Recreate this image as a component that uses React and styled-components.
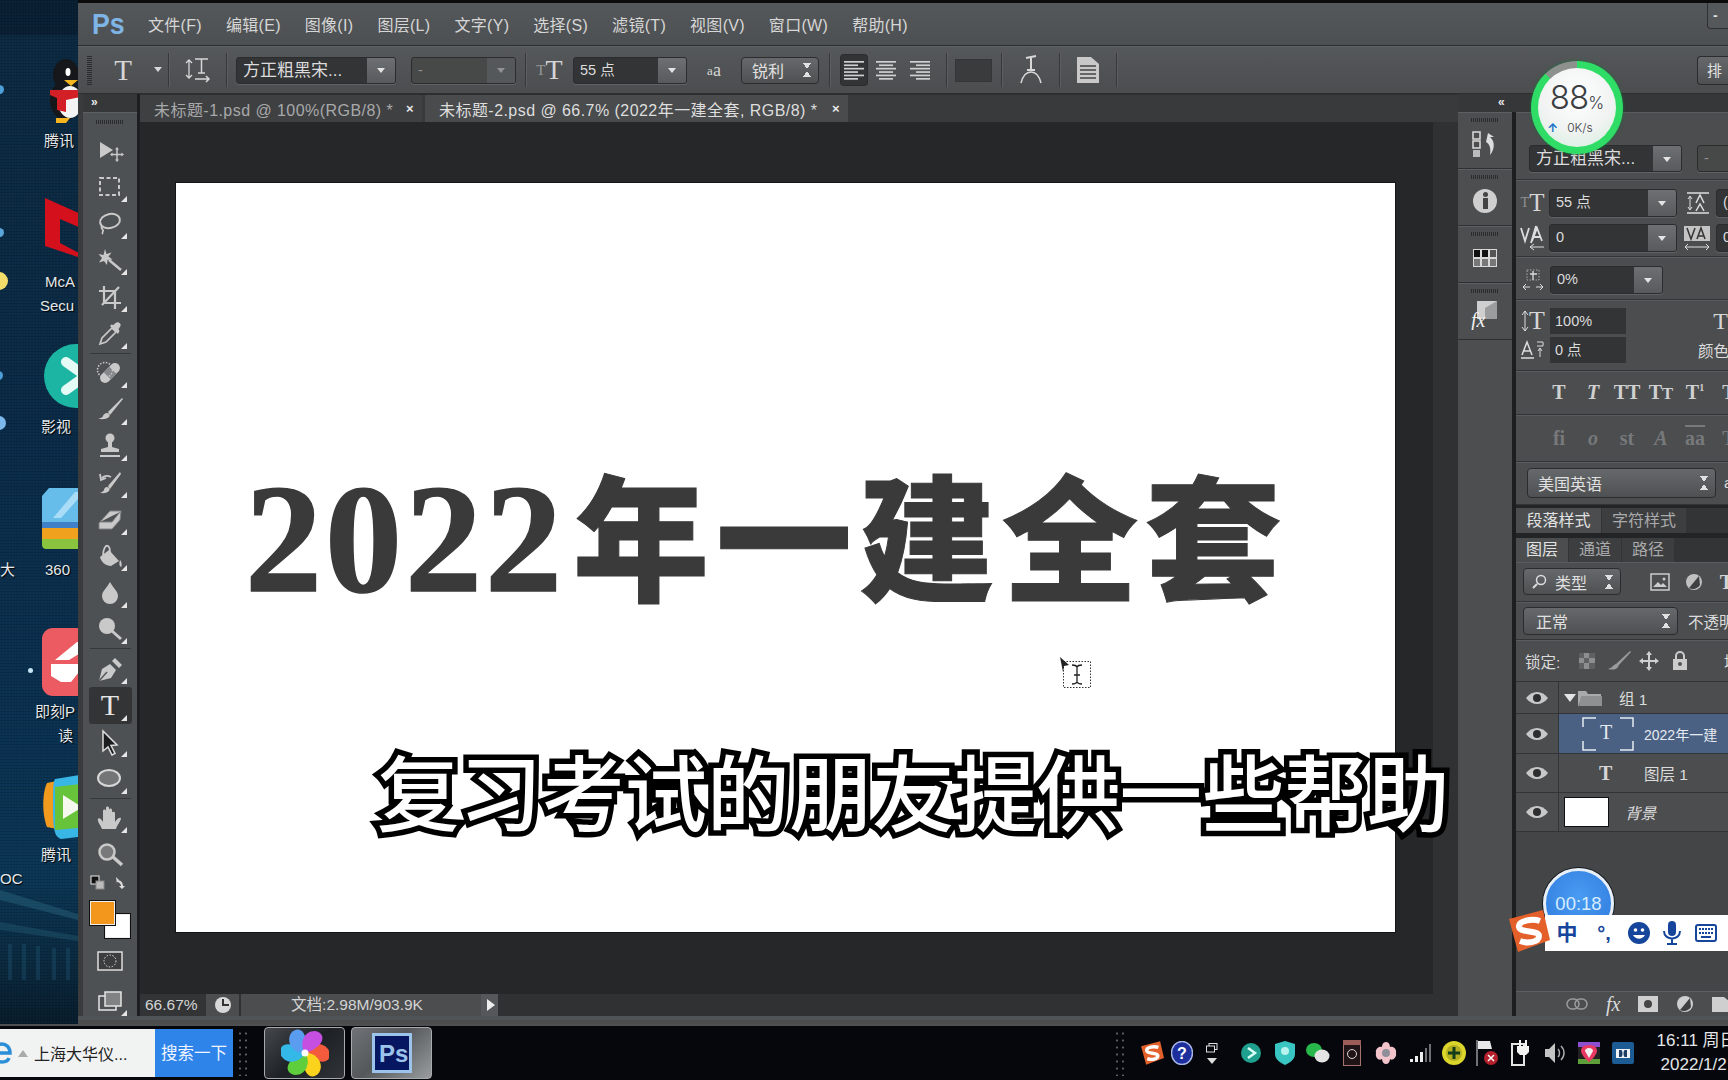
import React from "react";
import styled, { createGlobalStyle } from "styled-components";

const UI_FONT = `"Liberation Sans", "Noto Sans CJK SC", sans-serif`;

const GlobalStyle = createGlobalStyle`
  html, body { margin: 0; padding: 0; background: #000; }
  body { width: 1728px; height: 1080px; overflow: hidden; font-family: ${UI_FONT}; }
  * { box-sizing: border-box; }
`;

const Screen = styled.div`
  position: relative;
  width: 1728px;
  height: 1080px;
  overflow: hidden;
  display: grid;
  grid-template-columns: 78px 1650px;
  grid-template-rows: 1024px 56px;
`;

/* desktop behind the window */
const Wallpaper = styled.div`
  position: relative;
  overflow: hidden;
  background:
    repeating-linear-gradient(90deg, rgba(255,255,255,.012) 0 1px, transparent 1px 3px),
    repeating-linear-gradient(0deg, rgba(0,0,0,.14) 0 1px, transparent 1px 3px),
    linear-gradient(180deg, #091f33 0, #091f33 34px, #0b2941 36px, #0a2b47 420px, #0a3050 700px, #0a3655 880px, #0a2a40 960px, #071c2c 1024px);
`;

const WallBridge = styled.div`
  position: absolute;
  left: 0;
  top: 860px;
`;

const DeskIcon = styled.div`
  position: absolute;
  left: ${(p) => p.$x}px;
  top: ${(p) => p.$y}px;
`;

const DeskLabel = styled.div`
  position: absolute;
  left: ${(p) => p.$x}px;
  top: ${(p) => p.$y}px;
  color: #e4e8ea;
  font-size: 15px;
  line-height: 18px;
  white-space: nowrap;
  text-shadow: 1px 1px 1px #000;
`;

const Dot = styled.div`
  position: absolute;
  left: ${(p) => p.$x}px;
  top: ${(p) => p.$y}px;
  width: ${(p) => p.$s}px;
  height: ${(p) => p.$s}px;
  border-radius: 50%;
  background: ${(p) => p.$c};
`;

/* photoshop window */
const Win = styled.div`
  display: flex;
  flex-direction: column;
  height: 1024px;
  background: #4a4c4e;
  border-top: 3px solid #0b0b0c;
  border-left: 1px solid #222;
  margin-left: -1px;
`;

const MenuBar = styled.div`
  height: 43px;
  flex: none;
  display: flex;
  align-items: center;
  background: linear-gradient(180deg, #55585a, #4d5052);
  border-bottom: 1px solid #2b2c2d;
  position: relative;
  padding-left: 14px;
`;

const PsLogo = styled.div`
  width: 56px;
  font: bold 29px/1 "Liberation Sans", sans-serif;
  color: #7fb4e6;
  transform: scaleX(.92);
  transform-origin: left;
`;

const MenuItem = styled.span`
  color: #d6d6d6;
  font-size: 16px;
  margin-right: 24px;
  white-space: nowrap;
  letter-spacing: .3px;
`;

const WinBtn = styled.div`
  position: absolute;
  right: 0;
  top: 0;
  width: 21px;
  height: 26px;
  border: 1px solid #2f3031;
  border-top: 0;
  border-right: 0;
  border-radius: 0 0 0 4px;
  background: #55585a;
  color: #ddd;
  font: bold 14px/24px "Liberation Sans", sans-serif;
  padding-left: 5px;
`;

const OptionsBar = styled.div`
  height: 48px;
  flex: none;
  display: flex;
  align-items: center;
  padding-left: 9px;
  background: linear-gradient(180deg, #55585a, #4b4d4f);
  border-top: 1px solid #606366;
  border-bottom: 1px solid #2d2e2f;
`;

const Grip = styled.div`
  width: ${(p) => p.$w || 4}px;
  height: ${(p) => p.$h || 30}px;
  flex: none;
  background: repeating-linear-gradient(${(p) => (p.$flat ? "90deg" : "0deg")}, #2b2c2d 0 1px, transparent 1px 2px);
`;

const Slot = styled.div`
  width: ${(p) => p.$w}px;
  flex: none;
  display: flex;
  align-items: center;
  justify-content: center;
  color: #d9d9d9;
`;

const Sep = styled.div`
  width: 1px;
  height: 34px;
  flex: none;
  margin-left: ${(p) => p.$ml || 0}px;
  background: #37383a;
  box-shadow: 1px 0 0 #5c5f61;
`;

const SerifGlyph = styled.span`
  font-family: "Liberation Serif", serif;
  font-size: ${(p) => p.$s || 26}px;
  line-height: 1;
  color: ${(p) => p.$c || "#d6d6d6"};
  font-weight: ${(p) => p.$b || 400};
  font-style: ${(p) => (p.$i ? "italic" : "normal")};
`;

const Combo = styled.div`
  width: ${(p) => p.$w}px;
  height: ${(p) => p.$h || 27}px;
  flex: none;
  margin-left: ${(p) => p.$ml || 0}px;
  display: flex;
  border: 1px solid #2b2c2d;
  border-radius: 3px;
  background: ${(p) => (p.$dim ? "#474949" : "#333436")};
  box-shadow: 0 1px 0 #606366;
  overflow: hidden;
`;

const ComboText = styled.div`
  flex: 1;
  padding-left: 6px;
  font-size: ${(p) => p.$s || 14.5}px;
  line-height: 25px;
  color: ${(p) => (p.$dim ? "#8f9192" : "#dcdcdc")};
  white-space: nowrap;
  overflow: hidden;
`;

const ComboArrow = styled.div`
  width: 28px;
  flex: none;
  display: flex;
  align-items: center;
  justify-content: center;
  background: ${(p) => (p.$dim ? "#55585a" : "linear-gradient(180deg, #6d7072, #585a5c)")};
  &::after {
    content: "";
    border: 4px solid transparent;
    border-top: 5px solid ${(p) => (p.$dim ? "#8f9192" : "#e4e4e4")};
    margin-top: 5px;
  }
`;

const Stepper = styled.div`
  width: ${(p) => p.$w}px;
  height: ${(p) => p.$h || 27}px;
  flex: none;
  margin-left: ${(p) => p.$ml || 0}px;
  display: flex;
  align-items: center;
  justify-content: space-between;
  padding: 0 7px 0 ${(p) => p.$pl || 10}px;
  border: 1px solid #2b2c2d;
  border-radius: 4px;
  background: linear-gradient(180deg, #66696b, #4e5052);
  color: #e0e0e0;
  font-size: 16px;
  white-space: nowrap;
  &::after {
    content: "";
    width: 8px;
    height: 14px;
    flex: none;
    background:
      linear-gradient(to top right, transparent 50%, #e0e0e0 50%) 0 0 / 4px 6px no-repeat,
      linear-gradient(to top left, transparent 50%, #e0e0e0 50%) 4px 0 / 4px 6px no-repeat,
      linear-gradient(to bottom right, transparent 50%, #e0e0e0 50%) 0 8px / 4px 6px no-repeat,
      linear-gradient(to bottom left, transparent 50%, #e0e0e0 50%) 4px 8px / 4px 6px no-repeat;
  }
`;

const AlignBtn = styled.div`
  width: ${(p) => p.$w}px;
  height: 30px;
  flex: none;
  margin-left: ${(p) => p.$ml || 0}px;
  display: flex;
  align-items: center;
  justify-content: center;
  border-radius: 3px;
  background: ${(p) => (p.$on ? "#333436" : "transparent")};
  box-shadow: ${(p) => (p.$on ? "0 0 0 1px #2b2c2d" : "none")};
`;

const Swatch = styled.div`
  width: 37px;
  height: 23px;
  flex: none;
  margin-left: 8px;
  background: #3a3b3c;
  border: 1px solid #343536;
`;

const WordBtn = styled.div`
  margin-left: auto;
  width: 31px;
  height: 29px;
  border: 1px solid #2b2c2d;
  border-right: 0;
  border-radius: 4px 0 0 4px;
  background: linear-gradient(180deg, #66696b, #4e5052);
  color: #e0e0e0;
  font-size: 15px;
  line-height: 27px;
  padding-left: 9px;
  white-space: nowrap;
`;

const Workspace = styled.div`
  height: 922px;
  flex: none;
  display: flex;
  background: #1d1e1f;
`;

const ToolCol = styled.div`
  width: 59px;
  flex: none;
  padding-left: 5px;
  display: flex;
  flex-direction: column;
  background: #3a3b3d;
`;

const CollapseStrip = styled.div`
  height: 18px;
  flex: none;
  background: #363739;
  color: #e8e8e8;
  font: bold 12px/17px "Liberation Sans", sans-serif;
  padding-left: ${(p) => p.$pl}px;
`;

const ToolBox = styled.div`
  flex: 1;
  display: flex;
  flex-direction: column;
  align-items: center;
  background: #4e5153;
  border-top: 1px solid #5d6062;
`;

const ToolGrip = styled(Grip)`
  margin: 7px 0 8px;
`;

const ToolCell = styled.div`
  position: relative;
  width: 43px;
  height: 36.6px;
  flex: none;
  display: flex;
  align-items: center;
  justify-content: center;
  border-radius: 3px;
  background: ${(p) => (p.$on ? "#333436" : "transparent")};
  &::after {
    content: "";
    display: ${(p) => (p.$more ? "block" : "none")};
    position: absolute;
    right: 5px;
    bottom: 3px;
    border-left: 6px solid transparent;
    border-bottom: 6px solid #e6e6e6;
  }
`;

const ToolRule = styled.div`
  width: 41px;
  height: 1px;
  margin: 1px 0;
  flex: none;
  background: #37383a;
`;

const ColorWell = styled.div`
  position: relative;
  width: 43px;
  height: 40px;
  flex: none;
  margin-top: 9px;
`;

const ColorChip = styled.div`
  position: absolute;
  left: ${(p) => p.$x}px;
  top: ${(p) => p.$y}px;
  width: 27px;
  height: 26px;
  background: ${(p) => p.$c};
  border: 1px solid #111;
  box-shadow: inset 0 0 0 1px #eee;
`;

const QuickMask = styled.div`
  height: 42px;
  flex: none;
  margin-top: 1px;
`;

const Center = styled.div`
  width: 1318px;
  flex: none;
  margin-left: 3px;
  display: flex;
  flex-direction: column;
  background: #262729;
`;

const TabRow = styled.div`
  height: 28px;
  flex: none;
  display: flex;
  align-items: flex-end;
  background: #393a3c;
  border-top: 1px solid #2d2e2f;
`;

const DocTab = styled.div`
  width: ${(p) => p.$w}px;
  height: 27px;
  flex: none;
  margin-right: 3px;
  display: flex;
  align-items: center;
  justify-content: space-between;
  padding: 0 8px 0 14px;
  background: ${(p) => (p.$on ? "#494b4d" : "#3f4042")};
  color: ${(p) => (p.$on ? "#dedede" : "#a8a9aa")};
  font-size: 16px;
  letter-spacing: .45px;
  white-space: nowrap;
  b { color: #e8e8e8; font-weight: 700; font-size: 13px; }
`;

const CanvasArea = styled.div`
  flex: 1;
  min-height: 0;
  display: flex;
`;

const Pasteboard = styled.div`
  width: 1293px;
  flex: none;
  padding: 61px 0 0 36px;
  background: #262729;
`;

const Gutter = styled.div`
  flex: 1;
  background: #303133;
`;

const Doc = styled.div`
  position: relative;
  width: 1219px;
  height: 749px;
  background: #fff;
  padding: 274px 0 0 69px;
  box-shadow: 0 0 0 1px #151515;
`;

const Heading = styled.h1`
  margin: 0;
  display: flex;
  align-items: baseline;
  color: #3a3a3a;
  white-space: nowrap;
  font-family: "Noto Sans CJK SC", sans-serif;
  font-weight: 900;
  font-size: 136px;
  line-height: 150px;
  letter-spacing: 7px;
  -webkit-text-stroke: 1px #3a3a3a;
`;

const HeadingDigits = styled.span`
  font-family: "Liberation Serif", serif;
  font-weight: 700;
  font-size: 154px;
  letter-spacing: 3px;
  margin-right: 8px;
  -webkit-text-stroke: 1.500px #3a3a3a;
`;

const TextCursor = styled.div`
  position: absolute;
  left: 884px;
  top: 474px;
`;

const StatusBar = styled.div`
  height: 22px;
  flex: none;
  display: flex;
  align-items: stretch;
  color: #d4d4d4;
  font-size: 15.5px;
  line-height: 22px;
  background: #303133;
`;

const StatusZoom = styled.div`
  width: 66px;
  padding-left: 5px;
  background: #333436;
`;

const StatusBtn = styled.div`
  width: 33px;
  display: flex;
  align-items: center;
  justify-content: center;
  background: #4b4d4f;
  margin-right: 2px;
`;

const StatusInfo = styled.div`
  width: 240px;
  text-align: center;
  padding-right: 8px;
  background: #4b4d4f;
  white-space: nowrap;
`;

const StatusArrow = styled.div`
  width: 17px;
  display: flex;
  align-items: center;
  justify-content: center;
  background: #55585a;
  &::after {
    content: "";
    border: 6px solid transparent;
    border-left: 8px solid #eee;
    margin-left: 8px;
  }
`;

const RightCol = styled.div`
  width: 270px;
  flex: none;
  display: flex;
  flex-direction: column;
`;

const RightBody = styled.div`
  flex: 1;
  min-height: 0;
  display: flex;
`;

const Dock = styled.div`
  width: 54px;
  flex: none;
  display: flex;
  flex-direction: column;
  background: #4c4e50;
`;

const DockCell = styled.div`
  height: 57px;
  flex: none;
  display: flex;
  flex-direction: column;
  align-items: center;
  padding-top: 5px;
  gap: 4px;
  background: #4c4e50;
  border-bottom: 1px solid #2f3031;
  border-top: 1px solid #5d6062;
`;

const DockIcon = styled.div`
  height: 36px;
  flex: none;
  display: flex;
  align-items: center;
  justify-content: center;
`;

const Panel = styled.div`
  width: 212px;
  flex: none;
  margin-left: 4px;
  display: flex;
  flex-direction: column;
  overflow: hidden;
  background: #46484a;
`;

const Section = styled.div`
  height: ${(p) => p.$h}px;
  flex: none;
  display: flex;
  flex-direction: column;
  justify-content: ${(p) => p.$jc || "center"};
  gap: ${(p) => p.$gap || 0}px;
  padding-left: ${(p) => p.$pl || 0}px;
  padding-bottom: ${(p) => p.$pb || 0}px;
  padding-top: ${(p) => p.$pt || 0}px;
  background: #4b4d4f;
  border-bottom: 1px solid #333435;
  box-shadow: inset 0 1px 0 #5a5d5f;
`;

const Row = styled.div`
  display: flex;
  align-items: center;
  white-space: nowrap;
  gap: ${(p) => p.$gap || 0}px;
`;

const FieldIcon = styled.div`
  width: ${(p) => p.$w || 33}px;
  flex: none;
  display: flex;
  align-items: center;
  justify-content: ${(p) => (p.$end ? "flex-end" : "center")};
  color: #d8d8d8;
`;

const PlainField = styled.div`
  width: 76px;
  height: 26px;
  flex: none;
  padding-left: 5px;
  background: #333436;
  color: #dcdcdc;
  font-size: 14.5px;
  line-height: 26px;
`;

const StyleGlyphs = styled.div`
  display: flex;
  padding-left: 26px;
`;

const StyleGlyph = styled.span`
  width: 34px;
  flex: none;
  text-align: center;
  font-family: "Liberation Serif", serif;
  font-size: ${(p) => p.$s || 20}px;
  font-weight: 700;
  font-style: ${(p) => (p.$i ? "italic" : "normal")};
  text-decoration: ${(p) => (p.$over ? "overline" : "none")};
  color: ${(p) => (p.$dim ? "#77797b" : "#d0d0d0")};
  white-space: nowrap;
  sup { font-size: 10px; }
`;

const Gap = styled.div`
  height: ${(p) => p.$h}px;
  flex: none;
  background: #232425;
`;

const PanelTabs = styled.div`
  height: ${(p) => p.$h}px;
  flex: none;
  display: flex;
  background: #333436;
`;

const PanelTab = styled.div`
  width: ${(p) => p.$w}px;
  flex: none;
  margin-right: 1px;
  text-align: center;
  font-size: 16px;
  line-height: ${(p) => p.$h}px;
  background: ${(p) => (p.$on ? "#4b4d4f" : "#3d3e40")};
  color: ${(p) => (p.$on ? "#e2e2e2" : "#a9aaab")};
`;

const Label = styled.span`
  color: ${(p) => p.$c || "#dcdcdc"};
  font-size: ${(p) => p.$s || 15.5}px;
  font-style: ${(p) => (p.$i ? "italic" : "normal")};
  width: ${(p) => (p.$w ? `${p.$w}px` : "auto")};
  margin-left: ${(p) => p.$ml || 0}px;
  flex: none;
  white-space: nowrap;
`;

const LayerRow = styled.div`
  height: ${(p) => p.$h}px;
  flex: none;
  display: flex;
  background: #4b4d4f;
  border-bottom: 1px solid #333435;
`;

const EyeCell = styled.div`
  width: 43px;
  flex: none;
  display: flex;
  align-items: center;
  justify-content: center;
  border-right: 1px solid #333435;
`;

const LayerBody = styled.div`
  flex: 1;
  display: flex;
  align-items: center;
  padding-left: ${(p) => p.$pl || 0}px;
  background: ${(p) => (p.$on ? "#4a6184" : "transparent")};
  white-space: nowrap;
`;

const SmartThumb = styled.div`
  position: relative;
  width: 52px;
  height: 34px;
  flex: none;
  display: flex;
  align-items: center;
  justify-content: center;
  margin-right: 10px;
`;

const ThumbGlyph = styled(SerifGlyph)`
  position: absolute;
  left: 18px;
  top: 5px;
`;

const RowGlyph = styled(SerifGlyph)`
  width: 45px;
  flex: none;
`;

const WhiteThumb = styled.div`
  width: 45px;
  height: 30px;
  flex: none;
  margin-right: 16px;
  background: #fff;
  border: 1px solid #111;
`;

const PanelFill = styled.div`
  flex: 1;
  background: ${(p) => p.$c || "#434547"};
`;

const PanelFoot = styled.div`
  height: 25px;
  flex: none;
  display: flex;
  align-items: center;
  padding-left: 50px;
  gap: 18px;
  background: #4b4d4f;
  border-top: 1px solid #5d6062;
`;

const WinFoot = styled.div`
  height: 4px;
  flex: none;
  background: #515456;
`;

/* taskbar */
const Taskbar = styled.div`
  grid-column: 1 / -1;
  display: flex;
  align-items: center;
  background: #05070c;
  border-top: 2px solid #4d4f51;
`;

const SearchBox = styled.div`
  width: 155px;
  height: 48px;
  flex: none;
  display: flex;
  align-items: center;
  background: #f1f2f2;
  overflow: hidden;
  color: #222;
  font-size: 16px;
  gap: 6px;
  white-space: nowrap;
`;

const SearchBtn = styled.div`
  width: 78px;
  height: 48px;
  flex: none;
  background: #2f84ea;
  color: #f0f5ff;
  font-size: 16.5px;
  line-height: 48px;
  text-align: center;
  white-space: nowrap;
`;

const DotGrip = styled.div`
  width: 12px;
  height: 46px;
  flex: none;
  margin-left: ${(p) => p.$ml}px;
  background: radial-gradient(circle, #5c5f63 1px, transparent 1.2px) 0 0 / 6px 7px;
`;

const TaskBtn = styled.div`
  width: 81px;
  height: 52px;
  flex: none;
  margin-left: ${(p) => p.$ml}px;
  display: flex;
  align-items: center;
  justify-content: center;
  border: 1px solid #a8abae;
  border-radius: 4px;
  background: ${(p) => (p.$on ? "linear-gradient(135deg, #6f7276, #55585b 45%, #9a9da0)" : "linear-gradient(135deg, #44484c, #1d2024 50%, #303338)")};
`;

const TrayGroup = styled.div`
  display: flex;
  flex: none;
  margin-left: ${(p) => p.$ml}px;
`;

const TrayCell = styled.div`
  width: ${(p) => p.$w}px;
  flex: none;
  display: flex;
  flex-direction: column;
  align-items: center;
  justify-content: center;
  gap: 5px;
`;

const Clock = styled.div`
  flex: none;
  margin-left: 17px;
  color: #e4e6e8;
  font-size: 17px;
  line-height: 24px;
  white-space: nowrap;
`;

const ClockDate = styled.div`
  padding-left: 4px;
`;

/* things floating above everything */
const Subtitle = styled.div`
  position: absolute;
  left: 377px;
  top: 729px;
  color: #fff;
  font-family: "Noto Sans CJK SC", sans-serif;
  font-weight: 500;
  font-size: 82.5px;
  line-height: 120px;
  white-space: nowrap;
  -webkit-text-stroke: 11px #000;
  paint-order: stroke fill;
`;

const SpeedBall = styled.div`
  position: absolute;
  left: 1531px;
  top: 61px;
  width: 92px;
  height: 93px;
  border-radius: 50%;
  padding: 7px;
  background: conic-gradient(#2fdc66 0 88%, #8d918e 88% 100%);
  box-shadow: 0 0 3px #0f7a35;
`;

const BallFace = styled.div`
  width: 100%;
  height: 100%;
  border-radius: 50%;
  display: flex;
  flex-direction: column;
  align-items: center;
  padding-top: 12px;
  background: radial-gradient(circle at 50% 35%, #fff 0, #f1f3f2 55%, #cfeeda 100%);
  color: #3c4043;
  font-family: Inter, sans-serif;
  font-weight: 300;
`;

const BallValue = styled.div`
  font-size: 33px;
  line-height: 34px;
  letter-spacing: -1px;
  small { font-size: 17px; letter-spacing: 0; }
`;

const BallSpeed = styled.div`
  display: flex;
  gap: 9px;
  font-size: 12px;
  line-height: 18px;
  margin: -1px 14px 0 0;
  i { color: #1d74c9; font-style: normal; font-weight: 700; }
`;

const TimerBall = styled.div`
  position: absolute;
  left: 1543px;
  top: 868px;
  width: 71px;
  height: 71px;
  border-radius: 50%;
  border: 3px solid #e6eef7;
  box-shadow: 0 0 0 1px #15181c;
  background: radial-gradient(circle at 50% 40%, #4a9cf2, #2c78dc);
  color: #d5ecff;
  font-size: 18.5px;
  line-height: 65px;
  text-align: center;
`;

const ImeBar = styled.div`
  position: absolute;
  left: 1507px;
  top: 910px;
  width: 221px;
  height: 42px;
  display: flex;
  align-items: center;
`;

const ImeLogo = styled.div`
  position: relative;
  z-index: 1;
  width: 43px;
  height: 42px;
  flex: none;
  margin-right: -5px;
`;

const ImeBody = styled.div`
  flex: 1;
  height: 36px;
  margin-top: 3px;
  display: flex;
  align-items: center;
  background: #fff;
  color: #16469c;
`;

const ImeItem = styled.div`
  width: ${(p) => p.$w}px;
  flex: none;
  display: flex;
  justify-content: center;
  font-size: ${(p) => p.$s || 20}px;
  font-weight: 700;
  line-height: 1;
`;

/* icons */
const C = "#c9c9c9";

const Svg = ({ w = 28, h = 28, vb, children }) => (
  <svg width={w} height={h} viewBox={vb || `0 0 ${w} ${h}`} fill="none" style={{ display: "block", flex: "none" }}>
    {children}
  </svg>
);

const tools = [
  { k: "move", d: <><path d="M5 6l13 8-13 8z" fill={C} /><path d="M22 13v11M17 18.500h10" stroke={C} strokeWidth="1.500" /><path d="M22 11l-2 2.500h4zM22 26l-2-2.500h4zM15 18.500l2.500-2v4zM29 18.500l-2.500-2v4z" fill={C} /></> },
  { k: "marquee", more: 1, d: <rect x="5" y="5" width="19" height="17" stroke={C} strokeWidth="2" strokeDasharray="4 2.500" /> },
  { k: "lasso", more: 1, d: <><ellipse cx="15" cy="12" rx="10" ry="7" stroke={C} strokeWidth="2" transform="rotate(-12 15 12)" /><path d="M7 17c-2 3 2 3 1 5s-1 2 0 3" stroke={C} strokeWidth="1.800" /></> },
  { k: "wand", more: 1, d: <><path d="M10 3l1.500 5 5-1.500-3 4 4 3-5 .5-.5 5-3-4-5 1.500 3-4.500-3.500-4 5 1z" fill={C} /><path d="M14 14l12 10" stroke={C} strokeWidth="2.500" /></> },
  { k: "crop", more: 1, d: <path d="M9 3v17h17M4 8h16v18M24 4L7 22" stroke={C} strokeWidth="2.200" /> },
  { k: "dropper", more: 1, d: <><path d="M5 25l2-6L17 9l4 4-10 10z" stroke={C} strokeWidth="1.700" /><path d="M15 7l8 8 1.500-3-1-2 2-3c1-3-3-5-5-3l-2 2-2-.5z" fill={C} /></>, rule: 1 },
  { k: "heal", more: 1, d: <><g transform="rotate(-45 15 14)"><rect x="3" y="9" width="24" height="10" rx="5" fill={C} /><rect x="11" y="9" width="8" height="10" fill="#85878a" /></g><circle cx="10" cy="11" r="7.500" stroke={C} strokeWidth="1.500" strokeDasharray="1.500 1.500" /></> },
  { k: "brush", more: 1, d: <><path d="M27 3L13 17l2 3L28 4z" fill={C} /><path d="M12 18c3 0 3 3 2 4-3 3-8 2-11 2 3-1 5-2 5-3s2-3 4-3z" fill={C} /></> },
  { k: "stamp", more: 1, d: <><circle cx="15" cy="6" r="4.500" fill={C} /><path d="M13 10h4v5l7 2v3H6v-3l7-2z" fill={C} /><path d="M5 23h20v2H5z" fill={C} /></> },
  { k: "history", more: 1, d: <><path d="M25 3L13 17l2 3L26 5z" fill={C} /><path d="M12 18c3 0 3 3 2 4-3 3-7 2-9 2 2-1 4-2 4-3s1-3 3-3z" fill={C} /><path d="M16 8c-4-2-7-1-9 1M5 5l1 6 5-2" stroke={C} strokeWidth="1.800" /></> },
  { k: "eraser", more: 1, d: <path d="M4 18L15 6h11l-1 9-8 9H4zM5 17h12l8-10" fill={C} stroke="#7e8082" strokeWidth="1" /> },
  { k: "bucket", more: 1, d: <><path d="M5 15l9-7 10 11-8 5c-5 0-10-4-11-9z" fill={C} /><path d="M8 14c0-8 3-11 5-10s2 4 2 7" stroke={C} strokeWidth="1.800" /><path d="M25 18c2 2 2 6 1 7-2-1-2-4-1-7z" fill={C} /></> },
  { k: "blur", more: 1, d: <path d="M15 4c3 6 8 9 8 14a8 8 0 01-16 0c0-5 5-8 8-14z" fill={C} /> },
  { k: "dodge", more: 1, d: <><circle cx="12" cy="11" r="8" fill={C} /><path d="M17 16l9 8" stroke={C} strokeWidth="3" /></>, rule: 1 },
  { k: "pen", more: 1, d: <><path d="M4 26l3-12 8-5 6 6-5 8z" fill={C} /><path d="M4 26l8-9" stroke="#55585a" strokeWidth="1.500" /><path d="M17 6l3-3 7 7-3 3z" fill={C} /></> },
  { k: "type", more: 1, on: 1, glyph: 1 },
  { k: "select", more: 1, d: <path d="M8 3l14 14-6 .5 4 8-3 1.500-4-8-5 4z" fill="#1c1d1e" stroke="#dedede" strokeWidth="1.500" /> },
  { k: "ellipse", more: 1, d: <ellipse cx="14" cy="14" rx="11" ry="8" fill="#737577" stroke="#d8d8d8" strokeWidth="2" />, rule: 1 },
  { k: "hand", more: 1, d: <path d="M7 25C5 20 2 17 3 15s4 1 5 3V7c0-2 3-2 3 0V4c0-2 3-2 3 0v2c0-2 3-2 3 0v3c0-2 3-1 3 0v9c2-3 4-5 6-4 0 3-4 7-5 11z" fill={C} /> },
  { k: "zoom", d: <><circle cx="12" cy="11" r="7.500" fill="#77797b" stroke={C} strokeWidth="2.500" /><path d="M18 16l9 8" stroke={C} strokeWidth="3.500" /></> },
];

const Tri = ({ c = "#d8d8d8" }) => (
  <Svg w={10} h={6}><path d="M1 0h8L5 5z" fill={c} /></Svg>
);

const AlignIcon = ({ side }) => {
  const x = (w) => (side === "left" ? 4 : side === "right" ? 24 - w : 14 - w / 2);
  const lines = [20, 14, 20, 14, 20, 14];
  return (
    <Svg w={28} h={24}>
      {lines.map((w, i) => (
        <rect key={i} x={x(w)} y={3 + i * 3.400} width={w} height="1.700" fill="#cfcfcf" />
      ))}
    </Svg>
  );
};

const Eye = () => (
  <Svg w={24} h={16}>
    <path d="M1 8c6-8 16-8 22 0-6 8-16 8-22 0z" fill="#c8c8c8" />
    <circle cx="12" cy="8" r="4" fill="#2d2e2f" />
  </Svg>
);

const Penguin = () => (
  <Svg w={34} h={66}>
    <ellipse cx="20" cy="17" rx="13" ry="16" fill="#15171b" />
    <ellipse cx="20" cy="42" rx="16" ry="20" fill="#15171b" />
    <ellipse cx="24" cy="44" rx="12" ry="16" fill="#f4f4f4" />
    <path d="M4 32h30v7l-14 3v12l-9-2v-12l-7-3z" fill="#d32027" />
    <path d="M18 22h14l-7 6z" fill="#f3b61f" />
    <ellipse cx="22" cy="14" rx="2.500" ry="4" fill="#fff" />
    <path d="M10 60h14l-4 5h-10z" fill="#f3b61f" />
  </Svg>
);

const McAfee = () => (
  <Svg w={36} h={70}>
    <path d="M0 0l36 16v14l-21-9v24l21 11v4L0 48z" fill="#d4101c" />
  </Svg>
);

const TealApp = () => (
  <Svg w={36} h={64}>
    <circle cx="32" cy="32" r="32" fill="#1cb5a3" />
    <path d="M22 18l14 10M22 46l14-10" stroke="#e4fbf6" strokeWidth="10" strokeLinecap="round" />
  </Svg>
);

const StackApp = () => (
  <Svg w={38} h={66}>
    <path d="M4 38h34v25H6c-4 0-5-2-5-5V42z" fill="#8ac43f" />
    <path d="M1 36h37v17H1z" fill="#f0a21f" />
    <path d="M1 32h37v10H1z" fill="#3f80c8" />
    <path d="M8 2h30v34H1V10z" fill="#67bde9" />
    <path d="M12 32L34 6h4v6L20 32z" fill="#a9dcf6" />
  </Svg>
);

const RedApp = () => (
  <Svg w={38} h={70}>
    <rect x="1" y="0" width="52" height="68" rx="11" fill="#ec5b61" />
    <path d="M36 14l2 0v12l-10 6H14zM10 36h28v8l-8 10H20l-10-6z" fill="#fff" />
  </Svg>
);

const VideoApp = () => (
  <Svg w={38} h={64}>
    <path d="M6 8C1 18 1 40 6 52l10 2V6z" fill="#f29a1d" />
    <path d="M14 4l24-4v62l-18 2c-6-2-8-8-8-30s0-26 2-30z" fill="#38b6e6" />
    <path d="M14 12l24-3v44l-24 2z" fill="#66c33a" />
    <path d="M22 20l16 10v4l-16 10z" fill="#f4f8ee" />
  </Svg>
);

const Bridge = () => (
  <Svg w={78} h={120}>
    <path d="M0 30l78 24v6L0 40z" fill="#2f6e86" opacity=".4" />
    <path d="M0 62l78 14v5L0 70z" fill="#2f6e86" opacity=".3" />
    <path d="M8 84h4v36H8zM22 84h4v36h-4zM36 86h4v34h-4zM52 88h4v32h-4zM66 88h4v32h-4z" fill="#1a4a66" opacity=".5" />
  </Svg>
);

const SogouLogo = ({ w = 43, h = 42 }) => (
  <Svg w={w} h={h} vb="0 0 43 42">
    <path d="M2 9L36 0l7 30-32 12z" fill="#e4602a" />
    <path d="M33 11C25 8 11 11 12 17s20 3 20 9-11 8-19 5" stroke="#fff" strokeWidth="6" fill="none" />
  </Svg>
);

const trayIcons = [
  <Svg w={20} h={20}><circle cx="10" cy="10" r="10" fill="#1f9f8e" /><path d="M7 5l7 5-7 5" stroke="#d8fff5" strokeWidth="2.500" /></Svg>,
  <Svg w={20} h={24}><path d="M10 0l10 3v10c0 6-6 9-10 11C6 22 0 19 0 13V3z" fill="#39c6c2" /><circle cx="10" cy="10" r="4" fill="#b9f3ee" /></Svg>,
  <Svg w={24} h={22}><ellipse cx="8" cy="8" rx="8" ry="7" fill="#27b74a" /><ellipse cx="16" cy="14" rx="7.500" ry="6.500" fill="#e4e4e4" /></Svg>,
  <Svg w={18} h={26}><rect x="0.500" y="0.500" width="17" height="25" fill="#201417" stroke="#a4736f" /><rect x="0" y="0" width="18" height="5" fill="#9c5c58" /><circle cx="9" cy="14" r="4.500" stroke="#d9d9d9" /></Svg>,
  <Svg w={24} h={24}><path d="M12 1c3 0 4 3 4 5 3-1 7 2 6 6 1 5-4 8-6 6 0 3-2 5-4 5s-4-2-4-5c-3 2-7-1-6-6-1-4 3-7 6-6 0-2 1-5 4-5z" fill="#f3c3cc" /><circle cx="12" cy="12" r="4" fill="#8e8f99" /></Svg>,
  <Svg w={22} h={20}><path d="M1 16h3v3H1zM6 13h3v6H6zM11 9h3v10h-3z" fill="#eee" /><path d="M16 5h2v14h-2zM20 1h2v18h-2z" fill="#6c6f73" /></Svg>,
  <Svg w={24} h={24}><circle cx="12" cy="12" r="12" fill="#dcd52c" /><circle cx="12" cy="12" r="8" fill="#b5b021" /><path d="M12 6v12M6 12h12" stroke="#143d1b" strokeWidth="3" /></Svg>,
  <Svg w={22} h={26}><path d="M1 0v26" stroke="#ddd" /><path d="M2 1h12l2 8H2z" fill="#e9e9e9" /><circle cx="15" cy="18" r="7" fill="#b4202c" /><path d="M12 15l6 6M18 15l-6 6" stroke="#fff" strokeWidth="1.500" /></Svg>,
  <Svg w={20} h={26}><rect x="1" y="4" width="12" height="21" fill="none" stroke="#e4e4e4" strokeWidth="2" /><path d="M8 0h2v6H8zM14 0h2v6h-2zM6 6h12v6l-3 3H9l-3-3z" fill="#f2f2f2" /></Svg>,
  <Svg w={22} h={20}><path d="M1 6h4l6-6v20l-6-6H1z" fill="#c4c4c4" /><path d="M14 6c2 2 2 6 0 8M17 3c4 4 4 10 0 14" stroke="#aaa" strokeWidth="1.500" /></Svg>,
  <Svg w={22} h={22}><rect width="22" height="22" fill="#222" /><path d="M0 0h22v5H0z" fill="#8c4fd0" /><path d="M0 17h22v5H0z" fill="#5e9f3a" /><path d="M11 3c6 0 8 3 8 6s-5 9-8 11C8 18 3 12 3 9s2-6 8-6z" fill="#e83a62" /><path d="M11 6c3 0 4 2 4 3l-4 7-4-7c0-1 1-3 4-3z" fill="#f2f2f2" /></Svg>,
  <Svg w={22} h={22}><rect width="22" height="22" rx="2" fill="#1d5b94" /><rect x="4" y="7" width="14" height="9" fill="#f0f4f8" /><path d="M7 8h2c2 0 2 7 0 7H7zM15 8h-2c-2 0-2 7 0 7h2z" fill="#1d3f66" /></Svg>,
];

const App = () => (
  <Screen>
    <GlobalStyle />
    <Wallpaper>
      <WallBridge><Bridge /></WallBridge>
      <Dot $x={-5} $y={85} $s={9} $c="#4e9ed8" />
      <Dot $x={-5} $y={228} $s={9} $c="#5aa6da" />
      <Dot $x={-10} $y={272} $s={18} $c="#f2dd6a" />
      <Dot $x={-6} $y={371} $s={9} $c="#4e9ed8" />
      <Dot $x={-8} $y={416} $s={14} $c="#7cb8ec" />
      <Dot $x={28} $y={668} $s={5} $c="#c5e6f5" />
      <DeskIcon $x={46} $y={58}><Penguin /></DeskIcon>
      <DeskLabel $x={44} $y={132}>腾讯</DeskLabel>
      <DeskIcon $x={45} $y={198}><McAfee /></DeskIcon>
      <DeskLabel $x={45} $y={273}>McA</DeskLabel>
      <DeskLabel $x={40} $y={297}>Secu</DeskLabel>
      <DeskIcon $x={44} $y={344}><TealApp /></DeskIcon>
      <DeskLabel $x={41} $y={418}>影视</DeskLabel>
      <DeskIcon $x={41} $y={486}><StackApp /></DeskIcon>
      <DeskLabel $x={45} $y={561}>360</DeskLabel>
      <DeskLabel $x={0} $y={561}>大</DeskLabel>
      <DeskIcon $x={41} $y={628}><RedApp /></DeskIcon>
      <DeskLabel $x={35} $y={703}>即刻P</DeskLabel>
      <DeskLabel $x={58} $y={727}>读</DeskLabel>
      <DeskIcon $x={41} $y={775}><VideoApp /></DeskIcon>
      <DeskLabel $x={41} $y={846}>腾讯</DeskLabel>
      <DeskLabel $x={0} $y={870}>OC</DeskLabel>
    </Wallpaper>

    <Win>
      <MenuBar>
        <PsLogo>Ps</PsLogo>
        {["文件(F)", "编辑(E)", "图像(I)", "图层(L)", "文字(Y)", "选择(S)", "滤镜(T)", "视图(V)", "窗口(W)", "帮助(H)"].map((m) => (
          <MenuItem key={m}>{m}</MenuItem>
        ))}
        <WinBtn>-</WinBtn>
      </MenuBar>

      <OptionsBar>
        <Grip $w={5} />
        <Slot $w={62}><SerifGlyph $s={29}>T</SerifGlyph></Slot>
        <Slot $w={8}><Tri /></Slot>
        <Sep $ml={6} />
        <Slot $w={57}>
          <Svg w={28} h={26}><path d="M5 3v18M2 6l3-3 3 3M2 18l3 3 3-3" stroke="#d6d6d6" strokeWidth="1.300" /><path d="M11 2h13M17.500 2v14M14 16h7M11 22h14M22 19l3 3-3 3" stroke="#d6d6d6" strokeWidth="1.500" /></Svg>
        </Slot>
        <Sep />
        <Combo $w={160} $ml={9}><ComboText $s={17}>方正粗黑宋...</ComboText><ComboArrow /></Combo>
        <Combo $w={105} $ml={15} $dim><ComboText $dim>-</ComboText><ComboArrow $dim /></Combo>
        <Sep $ml={9} />
        <Slot $w={47}><SerifGlyph $s={15} $c="#98999a">T</SerifGlyph><SerifGlyph $s={28}>T</SerifGlyph></Slot>
        <Combo $w={114}><ComboText>55 点</ComboText><ComboArrow /></Combo>
        <Slot $w={54}><SerifGlyph $s={13}>a</SerifGlyph><SerifGlyph $s={18}>a</SerifGlyph></Slot>
        <Stepper $w={78} $h={27}>锐利</Stepper>
        <Sep $ml={10} />
        <AlignBtn $w={26} $ml={11} $on><AlignIcon side="left" /></AlignBtn>
        <AlignBtn $w={34} $ml={2}><AlignIcon side="center" /></AlignBtn>
        <AlignBtn $w={34}><AlignIcon side="right" /></AlignBtn>
        <Sep $ml={9} />
        <Swatch />
        <Sep $ml={9} />
        <Slot $w={57}>
          <Svg w={24} h={30}><path d="M7 3l10-2M12 2v13M8 15h8" stroke="#d8d8d8" strokeWidth="2" /><path d="M2 28c2-8 6-11 10-11s8 3 10 11" stroke="#d8d8d8" strokeWidth="1.500" /></Svg>
        </Slot>
        <Sep />
        <Slot $w={56}>
          <Svg w={24} h={28}><path d="M1 1h14l8 7v19H1z" fill="#c9c9c9" /><path d="M4 10h16M4 14h16M4 18h16M4 22h16" stroke="#444" strokeWidth="1.500" /></Svg>
        </Slot>
        <Sep />
        <WordBtn>排</WordBtn>
      </OptionsBar>

      <Workspace>
        <ToolCol>
          <CollapseStrip $pl={8}>»</CollapseStrip>
          <ToolBox>
            <ToolGrip $w={28} $h={4} $flat />
            {tools.map((t) => (
              <React.Fragment key={t.k}>
                <ToolCell $more={t.more} $on={t.on}>
                  {t.glyph ? <SerifGlyph $s={30} $c="#e6e6e6">T</SerifGlyph> : <Svg w={30} h={28}>{t.d}</Svg>}
                </ToolCell>
                {t.rule && <ToolRule />}
              </React.Fragment>
            ))}
            <Svg w={42} h={18}>
              <rect x="2" y="3" width="8" height="8" fill="#111" stroke="#eee" />
              <rect x="7" y="8" width="8" height="8" fill="#bbb" stroke="#888" />
              <path d="M27 4l3 3h-2c3 0 6 2 6 6h2l-3 3-3-3h2c0-2-2-4-4-4v2z" fill="#ddd" />
            </Svg>
            <ColorWell>
              <ColorChip $x={15} $y={13} $c="#fff" />
              <ColorChip $x={0} $y={0} $c="#f3961c" />
            </ColorWell>
            <QuickMask>
              <Svg w={30} h={42}>
                <rect x="3" y="11" width="24" height="18" stroke="#ddd" strokeWidth="1.500" fill="#3c3d3f" />
                <circle cx="15" cy="20" r="6" stroke="#ddd" strokeDasharray="1.500 1.500" />
              </Svg>
            </QuickMask>
            <ToolCell $more>
              <Svg w={30} h={28}><rect x="4" y="9" width="17" height="14" stroke="#e4e4e4" strokeWidth="1.500" /><rect x="10" y="5" width="16" height="14" fill="#808284" stroke="#e4e4e4" strokeWidth="1.500" /></Svg>
            </ToolCell>
          </ToolBox>
        </ToolCol>

        <Center>
          <TabRow>
            <DocTab $w={282}>未标题-1.psd @ 100%(RGB/8) *<b>×</b></DocTab>
            <DocTab $w={423} $on>未标题-2.psd @ 66.7% (2022年一建全套, RGB/8) *<b>×</b></DocTab>
          </TabRow>
          <CanvasArea>
            <Pasteboard>
              <Doc>
                <Heading><HeadingDigits>2022</HeadingDigits>年一建全套</Heading>
                <TextCursor>
                  <Svg w={32} h={32}>
                    <rect x="3.500" y="4.500" width="27" height="26" stroke="#333" strokeDasharray="1.500 1.500" />
                    <path d="M0 0l9 8-5 1-1 6z" fill="#222" />
                    <path d="M12 8c2 0 4 0 5 2 1-2 3-2 5-2M17 10v15M12 27c2 0 4 0 5-2 1 2 3 2 5 2M14 18h6" stroke="#222" strokeWidth="1.300" />
                  </Svg>
                </TextCursor>
              </Doc>
            </Pasteboard>
            <Gutter />
          </CanvasArea>
          <StatusBar>
            <StatusZoom>66.67%</StatusZoom>
            <StatusBtn>
              <Svg w={18} h={18}><circle cx="9" cy="9" r="8" fill="#d8d8d8" /><path d="M8 3h2v5h5v2H8z" fill="#333" /></Svg>
            </StatusBtn>
            <StatusInfo>文档:2.98M/903.9K</StatusInfo>
            <StatusArrow />
          </StatusBar>
        </Center>

        <RightCol>
          <CollapseStrip $pl={40}>«</CollapseStrip>
          <RightBody>
            <Dock>
              <DockCell>
                <Grip $w={28} $h={4} $flat />
                <DockIcon><Svg w={30} h={28}><rect x="3" y="2" width="7" height="7" stroke="#ddd" strokeWidth="1.500" /><rect x="3" y="11" width="7" height="7" stroke="#ddd" strokeWidth="1.500" /><rect x="3" y="20" width="7" height="7" fill="#bbb" /><path d="M18 3l6 4h-4c5 4 5 12 0 18 1-6 0-11-4-13z" fill="#ddd" /></Svg></DockIcon>
              </DockCell>
              <DockCell>
                <Grip $w={28} $h={4} $flat />
                <DockIcon><Svg w={26} h={26}><circle cx="13" cy="13" r="12" fill="#cfcfcf" /><rect x="11" y="10" width="5" height="11" fill="#444" /><circle cx="13.500" cy="6.500" r="2.500" fill="#444" /></Svg></DockIcon>
              </DockCell>
              <DockCell>
                <Grip $w={28} $h={4} $flat />
                <DockIcon><Svg w={24} h={18}><rect width="24" height="18" fill="#d8d8d8" /><path d="M1 1h6v7H1zM9 1h6v7H9z" fill="#111" /><path d="M1 10h6v7H1zM9 10h6v7H9zM17 10h6v7h-6z" fill="#777" /><path d="M17 1h6v7h-6z" fill="#555" /></Svg></DockIcon>
              </DockCell>
              <DockCell>
                <Grip $w={28} $h={4} $flat />
                <DockIcon><Svg w={28} h={30}><path d="M6 1h20v18H6z" fill="#cfcfcf" /><path d="M26 1v18H14V8z" fill="#9b9c9e" /><text x="0" y="27" fill="#f0f0f0" fontSize="20" fontStyle="italic" fontFamily="Liberation Serif">fx</text></Svg></DockIcon>
              </DockCell>
              <PanelFill $c="#4c4e50" />
            </Dock>

            <Panel>
              <Section $h={68} $jc="flex-end" $pl={13} $pb={7}>
                <Row $gap={15}>
                  <Combo $w={153} $h={27}><ComboText $s={17}>方正粗黑宋...</ComboText><ComboArrow /></Combo>
                  <Combo $w={60} $h={27} $dim><ComboText $dim>-</ComboText></Combo>
                </Row>
              </Section>
              <Section $h={77} $gap={7} $pt={4}>
                <Row>
                  <FieldIcon><SerifGlyph $s={14} $c="#8f9192">T</SerifGlyph><SerifGlyph $s={25}>T</SerifGlyph></FieldIcon>
                  <Combo $w={128} $h={28}><ComboText>55 点</ComboText><ComboArrow /></Combo>
                  <FieldIcon $w={39}>
                    <Svg w={24} h={24}><path d="M2 2h22M2 22h22" stroke="#ddd" strokeWidth="1.500" /><path d="M5 6v12M3 8l2-3 2 3M3 16l2 3 2-3" stroke="#ddd" /><path d="M11 12l4-8 4 8M11 20l4-7 4 7" stroke="#ddd" strokeWidth="1.500" /></Svg>
                  </FieldIcon>
                  <Combo $w={40} $h={28}><ComboText>(</ComboText></Combo>
                </Row>
                <Row>
                  <FieldIcon><Svg w={26} h={26}><path d="M1 3l4 13 4-13M12 16l5-13 5 13M14 12h6M11 18l5-17" stroke="#ddd" strokeWidth="1.800" /><path d="M10 22h14M14 19l-4 3 4 3" stroke="#ddd" /></Svg></FieldIcon>
                  <Combo $w={128} $h={28}><ComboText>0</ComboText><ComboArrow /></Combo>
                  <FieldIcon $w={39}>
                    <Svg w={28} h={26}><rect x="1" y="1" width="26" height="15" fill="#c4c4c4" /><path d="M4 3l4 11 4-11M14 14l4-11 4 11M15 11h6" stroke="#333" strokeWidth="1.500" /><path d="M2 22h24M5 19l-3 3 3 3M23 19l3 3-3 3" stroke="#ddd" /></Svg>
                  </FieldIcon>
                  <Combo $w={40} $h={28}><ComboText>0</ComboText></Combo>
                </Row>
              </Section>
              <Section $h={43} $pt={4}>
                <Row>
                  <FieldIcon $w={34}>
                    <Svg w={22} h={24}><path d="M5 2h12v10H5z" stroke="#aaa" strokeDasharray="1.500 1.500" /><path d="M8 6h7M11 3v9" stroke="#ddd" strokeWidth="1.300" /><path d="M1 19h7M21 19h-7M4 16l-3 3 3 3M18 16l3 3-3 3" stroke="#ddd" /></Svg>
                  </FieldIcon>
                  <Combo $w={113} $h={28}><ComboText>0%</ComboText><ComboArrow /></Combo>
                </Row>
              </Section>
              <Section $h={71} $gap={3}>
                <Row>
                  <FieldIcon $w={34}><Svg w={8} h={24}><path d="M4 2v20M1 6l3-4 3 4M1 18l3 4 3-4" stroke="#ddd" /></Svg><SerifGlyph $s={26}>T</SerifGlyph></FieldIcon>
                  <PlainField>100%</PlainField>
                  <FieldIcon $w={102} $end><SerifGlyph $s={24}>T</SerifGlyph></FieldIcon>
                </Row>
                <Row>
                  <FieldIcon $w={34}><Svg w={26} h={22}><path d="M2 16l5-13 5 13M4 12h6M1 19h13" stroke="#ddd" strokeWidth="1.500" /><path d="M20 18V9M18 12l2-3 2 3" stroke="#ddd" /><path d="M17 3h6v4h-6" stroke="#ddd" /></Svg></FieldIcon>
                  <PlainField>0 点</PlainField>
                  <Label $ml={72}>颜色</Label>
                </Row>
              </Section>
              <Section $h={44}>
                <StyleGlyphs>
                  <StyleGlyph>T</StyleGlyph>
                  <StyleGlyph $i>T</StyleGlyph>
                  <StyleGlyph>TT</StyleGlyph>
                  <StyleGlyph>T<small>T</small></StyleGlyph>
                  <StyleGlyph>T<sup>1</sup></StyleGlyph>
                  <StyleGlyph>T</StyleGlyph>
                </StyleGlyphs>
              </Section>
              <Section $h={47}>
                <StyleGlyphs>
                  <StyleGlyph $dim>fi</StyleGlyph>
                  <StyleGlyph $dim $i>o</StyleGlyph>
                  <StyleGlyph $dim>st</StyleGlyph>
                  <StyleGlyph $dim $i>A</StyleGlyph>
                  <StyleGlyph $dim $over>aa</StyleGlyph>
                  <StyleGlyph $dim>T</StyleGlyph>
                </StyleGlyphs>
              </Section>
              <Section $h={43} $pl={11}>
                <Row $gap={8}>
                  <Stepper $w={189} $h={30} $pl={10}>美国英语</Stepper>
                  <Label>a</Label>
                </Row>
              </Section>
              <Gap $h={3} />
              <PanelTabs $h={25}>
                <PanelTab $w={85} $h={25} $on>段落样式</PanelTab>
                <PanelTab $w={84} $h={25}>字符样式</PanelTab>
              </PanelTabs>
              <Gap $h={5} />
              <PanelTabs $h={24}>
                <PanelTab $w={52} $h={24} $on>图层</PanelTab>
                <PanelTab $w={52} $h={24}>通道</PanelTab>
                <PanelTab $w={52} $h={24}>路径</PanelTab>
              </PanelTabs>
              <Section $h={40} $pl={7}>
                <Row>
                  <Stepper $w={98} $h={27} $pl={8}>
                    <Row $gap={8}>
                      <Svg w={15} h={15}><circle cx="9" cy="6" r="4.500" stroke="#ddd" strokeWidth="1.500" /><path d="M5 10l-4 4" stroke="#ddd" strokeWidth="2" /></Svg>
                      类型
                    </Row>
                  </Stepper>
                  <FieldIcon $w={49} $end>
                    <Svg w={20} h={18}><rect x="1" y="1" width="18" height="16" stroke="#ccc" strokeWidth="1.500" /><path d="M3 14l5-5 3 3 2-2 4 4z" fill="#ccc" /><circle cx="14" cy="6" r="1.500" fill="#ccc" /></Svg>
                  </FieldIcon>
                  <FieldIcon $w={33} $end>
                    <Svg w={18} h={18}><circle cx="9" cy="9" r="8" fill="#c0c0c0" /><path d="M14 3L4 15a8 8 0 0011-3z" fill="#3f4042" /></Svg>
                  </FieldIcon>
                  <FieldIcon $w={30} $end><SerifGlyph $s={20} $b={700}>T</SerifGlyph></FieldIcon>
                </Row>
              </Section>
              <Section $h={38} $pl={7}>
                <Row $gap={10}>
                  <Stepper $w={155} $h={28} $pl={12}>正常</Stepper>
                  <Label>不透明</Label>
                </Row>
              </Section>
              <Section $h={42} $pl={9}>
                <Row>
                  <Label $w={52}>锁定:</Label>
                  <FieldIcon $w={20}>
                    <Svg w={16} h={16}><rect width="16" height="16" fill="#8c8e90" /><path d="M0 0h5v5H0zM10 0h6v5h-6zM5 5h5v5H5zM0 10h5v6H0zM10 10h6v6h-6z" fill="#5f6163" /></Svg>
                  </FieldIcon>
                  <FieldIcon $w={44}>
                    <Svg w={24} h={22}><path d="M23 1L9 14l2 2L24 2z" fill="#9a9b9d" /><path d="M9 14c2 0 3 2 2 3-2 3-6 3-10 2 3-1 4-2 5-3s2-2 3-2z" fill="#9a9b9d" /></Svg>
                  </FieldIcon>
                  <FieldIcon $w={15}>
                    <Svg w={20} h={20}><path d="M10 0l3 4h-2v5h5V7l4 3-4 3v-2h-5v5h2l-3 4-3-4h2v-5H4v2l-4-3 4-3v2h5V4H7z" fill="#d0d0d0" /></Svg>
                  </FieldIcon>
                  <FieldIcon $w={48}>
                    <Svg w={16} h={20}><path d="M4 8V5a4 4 0 018 0v3" stroke="#ccc" strokeWidth="2" /><rect x="1" y="8" width="14" height="11" fill="#ccc" /><circle cx="8" cy="13" r="2" fill="#555" /></Svg>
                  </FieldIcon>
                  <Label $ml={20}>填</Label>
                </Row>
              </Section>
              <LayerRow $h={32}>
                <EyeCell><Eye /></EyeCell>
                <LayerBody $pl={4}>
                  <Svg w={14} h={10}><path d="M1 1h12L7 9z" fill="#e4e4e4" /></Svg>
                  <Svg w={26} h={20}><path d="M1 17V3h8l2 3h13v3H5l-4 10z" fill="#aaa" /><path d="M4 8h21v10H2z" fill="#8f9092" /></Svg>
                  <Label $ml={16}>组 1</Label>
                </LayerBody>
              </LayerRow>
              <LayerRow $h={40}>
                <EyeCell><Eye /></EyeCell>
                <LayerBody $on $pl={23}>
                  <SmartThumb>
                    <Svg w={52} h={34}>
                      <path d="M1 10V1h13M38 1h13v9M1 24v9h13M38 33h13v-9" stroke="#e6eaf0" strokeWidth="1.500" />
                    </Svg>
                    <ThumbGlyph $s={20} $c="#e4e8ee">T</ThumbGlyph>
                  </SmartThumb>
                  <Label $c="#e6eaf0" $s={14}>2022年一建</Label>
                </LayerBody>
              </LayerRow>
              <LayerRow $h={39}>
                <EyeCell><Eye /></EyeCell>
                <LayerBody $pl={40}>
                  <RowGlyph $s={20} $b={700}>T</RowGlyph>
                  <Label>图层 1</Label>
                </LayerBody>
              </LayerRow>
              <LayerRow $h={39}>
                <EyeCell><Eye /></EyeCell>
                <LayerBody $pl={5}>
                  <WhiteThumb />
                  <Label $i>背景</Label>
                </LayerBody>
              </LayerRow>
              <PanelFill />
              <PanelFoot>
                <Svg w={22} h={12}><rect x="1" y="1" width="12" height="10" rx="5" stroke="#9a9b9d" strokeWidth="1.500" /><rect x="9" y="1" width="12" height="10" rx="5" stroke="#9a9b9d" strokeWidth="1.500" /></Svg>
                <SerifGlyph $s={20} $i $c="#dcdcdc">fx</SerifGlyph>
                <Svg w={20} h={16}><rect width="20" height="16" fill="#cfcfcf" /><circle cx="10" cy="8" r="4" fill="#444" /></Svg>
                <Svg w={18} h={18}><circle cx="9" cy="9" r="8" fill="#cfcfcf" /><path d="M14 3L4 15a8 8 0 0011-3z" fill="#3f4042" /></Svg>
                <Svg w={18} h={16}><path d="M0 1h12l6 5v10H0z" fill="#cfcfcf" /></Svg>
              </PanelFoot>
            </Panel>
          </RightBody>
        </RightCol>
      </Workspace>
      <WinFoot />
    </Win>

    <Taskbar>
      <SearchBox>
        <Svg w={12} h={24} vb="8 0 12 24"><path d="M-2 12h20c0-6-4-9-8-9-6 0-10 4-10 9s4 9 10 9c3 0 6-1 7-4" stroke="#2a8fd8" strokeWidth="3.500" /></Svg>
        <Svg w={10} h={7}><path d="M5 0l5 7H0z" fill="#aaa" /></Svg>
        <span>上海大华仪...</span>
      </SearchBox>
      <SearchBtn>搜索一下</SearchBtn>
      <DotGrip $ml={4} />
      <TaskBtn $ml={15}>
        <Svg w={48} h={48}>
          <g transform="translate(24 24)">
            {["#f45b3c", "#fbd21c", "#5fce3c", "#34b8e8", "#5a9cf0", "#c44fe0"].map((c, i) => (
              <path key={c} d="M0 0C-6-8-2-22 10-22 22-20 20-6 0 0z" fill={c} transform={`rotate(${60 + i * 60})`} />
            ))}
            <circle r="3.500" fill="#fff" />
          </g>
        </Svg>
      </TaskBtn>
      <TaskBtn $ml={6} $on>
        <Svg w={40} h={40}>
          <rect x="1.500" y="1.500" width="37" height="37" fill="#071660" stroke="#9cc4ea" strokeWidth="3" />
          <text x="7" y="29" fontFamily="Liberation Sans" fontWeight="700" fontSize="24" fill="#9cc4ea">Ps</text>
        </Svg>
      </TaskBtn>
      <DotGrip $ml={682} />
      <TrayGroup $ml={11}>
        <TrayCell $w={30}><SogouLogo w={24} h={28} /></TrayCell>
        <TrayCell $w={30}>
          <Svg w={22} h={24}><ellipse cx="11" cy="12" rx="10.500" ry="11.500" fill="#1d2f9c" stroke="#a7b5e6" strokeWidth="1.500" /><text x="6" y="18" fill="#fff" fontSize="16" fontWeight="700" fontFamily="Liberation Sans">?</text></Svg>
        </TrayCell>
        <TrayCell $w={30}>
          <Svg w={12} h={10}><rect x="3" y="0.500" width="8" height="6" stroke="#ddd" /><rect x="0.500" y="3" width="8" height="6" fill="#05070c" stroke="#ddd" /></Svg>
          <Svg w={10} h={6}><path d="M0 0h10L5 6z" fill="#ddd" /></Svg>
        </TrayCell>
      </TrayGroup>
      <TrayGroup $ml={7}>
        {trayIcons.map((icon, i) => (
          <TrayCell key={i} $w={33.8}>{icon}</TrayCell>
        ))}
      </TrayGroup>
      <Clock>
        16:11 周日
        <ClockDate>2022/1/2</ClockDate>
      </Clock>
    </Taskbar>

    <SpeedBall>
      <BallFace>
        <BallValue>88<small>%</small></BallValue>
        <BallSpeed><i>↑</i>0K/s</BallSpeed>
      </BallFace>
    </SpeedBall>
    <TimerBall>00:18</TimerBall>
    <ImeBar>
      <ImeLogo><SogouLogo /></ImeLogo>
      <ImeBody>
        <ImeItem $w={44} $s={21}>中</ImeItem>
        <ImeItem $w={30} $s={20}>°,</ImeItem>
        <ImeItem $w={40}>
          <Svg w={22} h={22}><circle cx="11" cy="11" r="11" fill="#16469c" /><circle cx="7.500" cy="8" r="1.800" fill="#fff" /><circle cx="14.500" cy="8" r="1.800" fill="#fff" /><path d="M5 13c3 5 9 5 12 0z" fill="#fff" /></Svg>
        </ImeItem>
        <ImeItem $w={26}>
          <Svg w={18} h={24}><rect x="5" y="0" width="8" height="15" rx="4" fill="#16469c" /><path d="M1 10c0 10 16 10 16 0M9 18v5M4 23h10" stroke="#16469c" strokeWidth="2" /></Svg>
        </ImeItem>
        <ImeItem $w={42}>
          <Svg w={22} h={18}><rect x="1" y="1" width="20" height="16" rx="2" fill="#fff" stroke="#16469c" strokeWidth="2" /><path d="M4 5h14M4 9h14" stroke="#16469c" strokeWidth="2" strokeDasharray="2 1" /><path d="M6 13h10" stroke="#16469c" strokeWidth="2" /></Svg>
        </ImeItem>
      </ImeBody>
    </ImeBar>
    <Subtitle>复习考试的朋友提供一些帮助</Subtitle>
  </Screen>
);

export default App;
